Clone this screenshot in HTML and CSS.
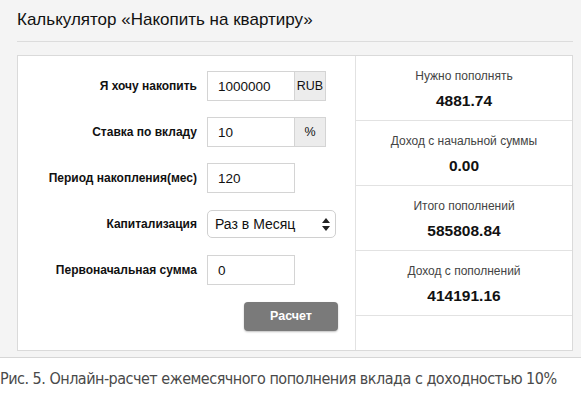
FILE: index.html
```html
<!DOCTYPE html>
<html lang="ru">
<head>
  <meta charset="UTF-8" />
  <meta name="viewport" content="width=device-width, initial-scale=1.0"/>
  <title>Калькулятор</title>
  <link rel="stylesheet" href="styles.css">
</head>
<body>
  <div class="screen">
    <h1 class="title">Калькулятор «Накопить на квартиру»</h1>

    <div class="calc">
      <div class="form">
        <div class="row">
          <label for="sum">Я хочу накопить</label>
          <div class="group">
            <input type="text" id="sum" value="1000000">
            <span class="addon">RUB</span>
          </div>
        </div>

        <div class="row">
          <label for="rate">Ставка по вкладу</label>
          <div class="group">
            <input type="text" id="rate" value="10">
            <span class="addon">%</span>
          </div>
        </div>

        <div class="row">
          <label for="period">Период накопления(мес)</label>
          <input type="text" id="period" value="120">
        </div>

        <div class="row">
          <label for="cap">Капитализация</label>
          <div class="select-wrap">
            <select id="cap">
              <option>Раз в Месяц</option>
              <option>Раз в Квартал</option>
              <option>Раз в Год</option>
            </select>
            <svg class="arrows" width="8" height="13" viewBox="0 0 8 13">
              <path d="M4 0 L8 5 L0 5 Z M0 8 L8 8 L4 13 Z" fill="#222"/>
            </svg>
          </div>
        </div>

        <div class="row">
          <label for="start">Первоначальная сумма</label>
          <input type="text" id="start" value="0">
        </div>

        <div class="row">
          <span></span>
          <button class="btn">Расчет</button>
        </div>
      </div>

      <div class="results">
        <div class="result">
          <div class="result-name">Нужно пополнять</div>
          <div class="result-value">4881.74</div>
        </div>
        <div class="result">
          <div class="result-name">Доход с начальной суммы</div>
          <div class="result-value">0.00</div>
        </div>
        <div class="result">
          <div class="result-name">Итого пополнений</div>
          <div class="result-value">585808.84</div>
        </div>
        <div class="result">
          <div class="result-name">Доход с пополнений</div>
          <div class="result-value">414191.16</div>
        </div>
        <div class="result empty"></div>
      </div>
    </div>
  </div>

  <p class="caption">Рис. 5. Онлайн-расчет ежемесячного пополнения вклада с доходностью 10%</p>
</body>
</html>
```

FILE: styles.css
```css
body {
  margin: 0;
  background-color: #ffffff;
  font-family: "Liberation Sans", Arial, sans-serif;
  color: #111;
}

.screen {
  background-color: #f4f4f4;
  padding: 0 8px 6px 17px;
  border-bottom: 1px solid #d6d6d6;
}

.title {
  margin: 0;
  height: 41px;
  line-height: 40px;
  font-size: 17px;
  font-weight: normal;
  color: #111;
  border-bottom: 1px solid #dcdcdc;
}

.calc {
  margin-top: 13px;
  display: flex;
  height: 294px;
  background-color: #ffffff;
  border: 1px solid #dadada;
}

.form {
  width: 337px;
  border-right: 1px solid #e2e2e2;
  padding-top: 15px;
  display: flex;
  flex-direction: column;
  gap: 16px;
}

.row {
  display: grid;
  grid-template-columns: 179px auto;
  column-gap: 10px;
  align-items: center;
  height: 30px;
}

.row label {
  text-align: right;
  font-size: 12px;
  font-weight: bold;
  color: #111;
}

.group {
  display: flex;
}

input {
  box-sizing: border-box;
  width: 88px;
  height: 30px;
  padding: 0 10px;
  border: 1px solid #d4d4d4;
  border-radius: 0;
  font-family: "Liberation Sans", Arial, sans-serif;
  font-size: 13.5px;
  color: #111;
  background: #fff;
}

.addon {
  box-sizing: border-box;
  width: 31px;
  height: 30px;
  line-height: 28px;
  text-align: center;
  font-size: 12.5px;
  background-color: #ececec;
  border: 1px solid #d4d4d4;
  border-left: none;
}

.select-wrap {
  position: relative;
  width: 129px;
}

select {
  appearance: none;
  -webkit-appearance: none;
  box-sizing: border-box;
  width: 129px;
  height: 28px;
  padding: 0 7px;
  border: 1px solid #d0d0d0;
  border-radius: 5px;
  background: #fff;
  font-family: "Liberation Sans", Arial, sans-serif;
  font-size: 14px;
  color: #111;
}

.arrows {
  position: absolute;
  right: 6px;
  top: 8px;
}

.btn {
  width: 94px;
  height: 29px;
  margin-left: 37px;
  border: none;
  border-radius: 4px;
  background-color: #7a7a7a;
  color: #fff;
  font-family: "Liberation Sans", Arial, sans-serif;
  font-size: 12.5px;
  font-weight: bold;
  box-shadow: 0 1px 2px rgba(0, 0, 0, 0.25);
}

.results {
  flex: 1;
  display: flex;
  flex-direction: column;
}

.result {
  height: 64px;
  border-bottom: 1px solid #e2e2e2;
  text-align: center;
  display: flex;
  flex-direction: column;
  justify-content: center;
  gap: 9px;
}

.result.empty {
  border-bottom: none;
  flex: 1;
}

.result-name {
  font-size: 12px;
  color: #444;
  padding-top: 2px;
}

.result-value {
  font-size: 15.5px;
  font-weight: bold;
  color: #111;
}

.caption {
  margin: 11px 0 0;
  font-family: "DejaVu Sans Condensed", "Liberation Sans", sans-serif;
  font-size: 16px;
  letter-spacing: -0.5px;
  color: #4a4a4a;
  white-space: nowrap;
}
```
